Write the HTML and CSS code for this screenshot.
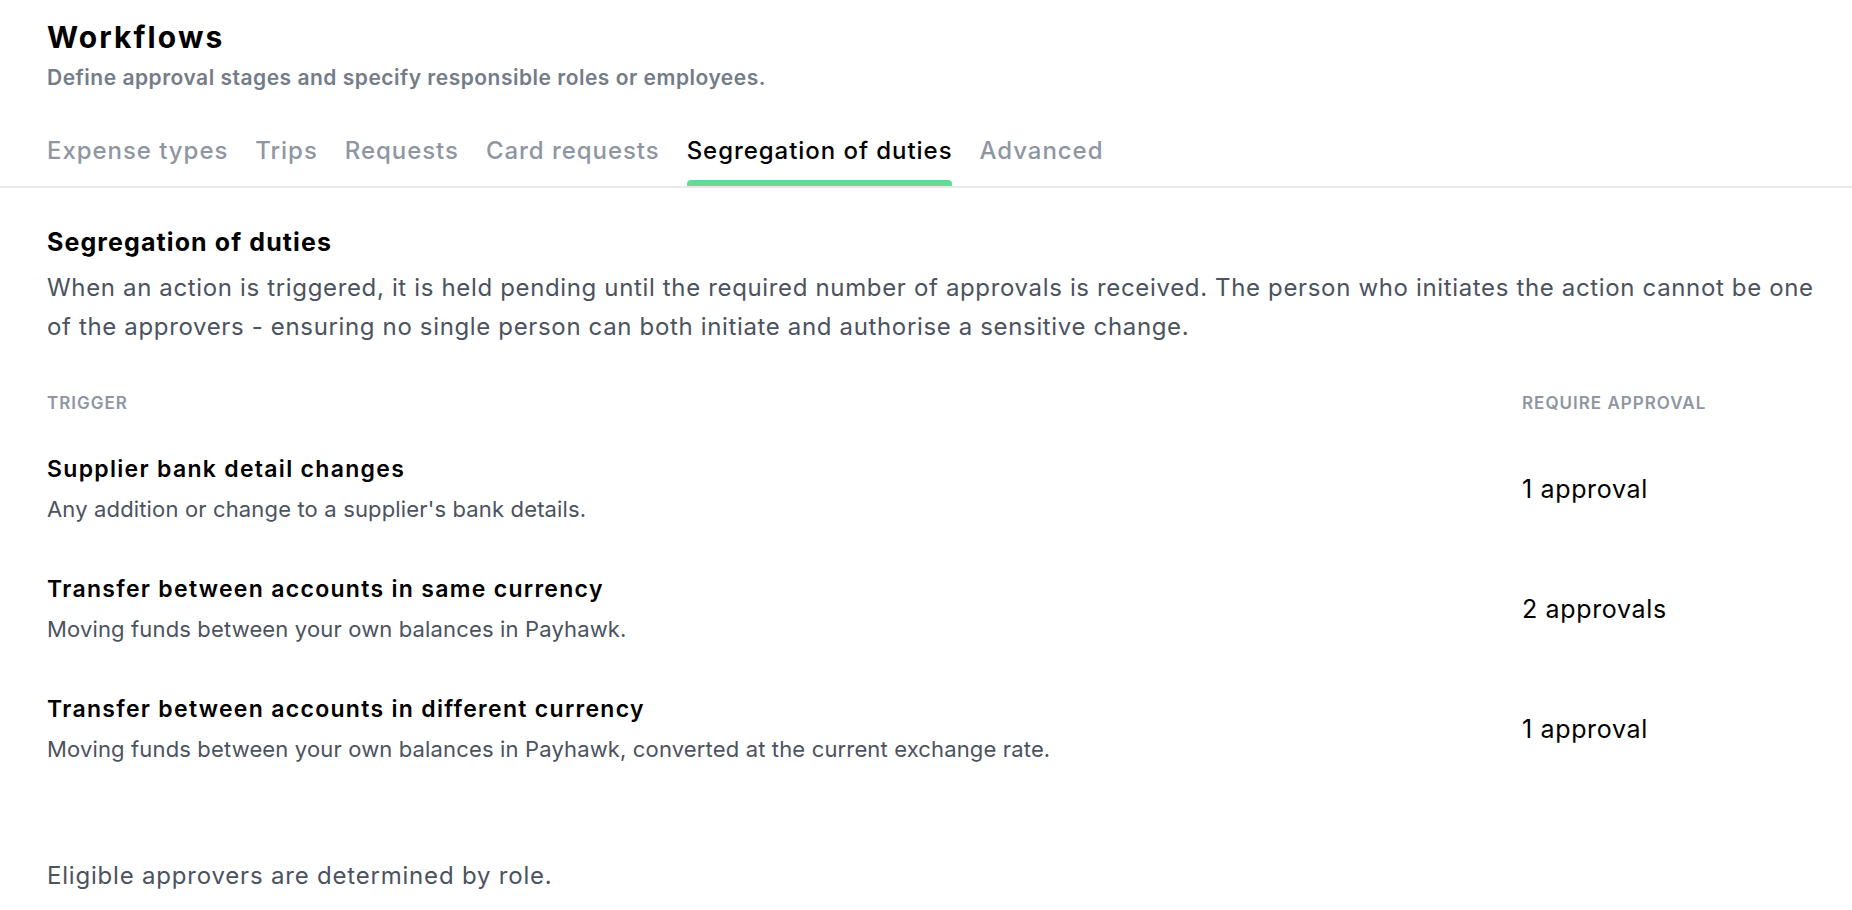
FILE: index.html
```html
<!DOCTYPE html>
<html lang="en">
<head>
<meta charset="utf-8">
<title>Workflows</title>
<link rel="stylesheet" href="styles.css">
</head>
<body>
<header class="page-header">
  <h1 class="page-title">Workflows</h1>
  <p class="page-subtitle">Define approval stages and specify responsible roles or employees.</p>
  <nav class="tabs">
    <a class="tab">Expense types</a>
    <a class="tab">Trips</a>
    <a class="tab">Requests</a>
    <a class="tab">Card requests</a>
    <a class="tab tab-active">Segregation of duties</a>
    <a class="tab">Advanced</a>
  </nav>
</header>
<main class="content">
  <h2 class="section-title">Segregation of duties</h2>
  <p class="section-desc">When an action is triggered, it is held pending until the required number of approvals is received. The person who initiates the action cannot be one of the approvers - ensuring no single person can both initiate and authorise a sensitive change.</p>
  <div class="table">
    <div class="table-head">
      <div class="col-label">TRIGGER</div>
      <div class="col-label">REQUIRE APPROVAL</div>
    </div>
    <div class="row">
      <div class="row-main">
        <div class="row-title">Supplier bank detail changes</div>
        <div class="row-desc">Any addition or change to a supplier's bank details.</div>
      </div>
      <div class="row-value">1 approval</div>
    </div>
    <div class="row">
      <div class="row-main">
        <div class="row-title">Transfer between accounts in same currency</div>
        <div class="row-desc">Moving funds between your own balances in Payhawk.</div>
      </div>
      <div class="row-value">2 approvals</div>
    </div>
    <div class="row">
      <div class="row-main">
        <div class="row-title">Transfer between accounts in different currency</div>
        <div class="row-desc">Moving funds between your own balances in Payhawk, converted at the current exchange rate.</div>
      </div>
      <div class="row-value">1 approval</div>
    </div>
  </div>
  <p class="footnote">Eligible approvers are determined by role.</p>
</main>
</body>
</html>
```

FILE: styles.css
```css
* { box-sizing: border-box; }
html, body {
  margin: 0;
  padding: 0;
  background: #ffffff;
  font-family: Inter, "Noto Sans", "Liberation Sans", sans-serif;
  color: #000000;
}
.page-header {
  padding: 19px 47px 0;
  border-bottom: 2px solid #e8e9eb;
}
.page-title {
  margin: 0;
  font-size: 30px;
  font-weight: 700;
  line-height: 36px;
  letter-spacing: 2.1px;
}
.page-subtitle {
  margin: 9px 0 0;
  font-size: 21px;
  font-weight: 600;
  line-height: 28px;
  letter-spacing: 0.5px;
  color: #747c89;
}
.tabs {
  display: flex;
  gap: 27px;
  margin-top: 44px;
}
.tab {
  display: flex;
  flex-direction: column;
  font-size: 24px;
  font-weight: 500;
  line-height: 30px;
  letter-spacing: 0.95px;
  color: #8e96a2;
}
.tab::after {
  content: "";
  height: 6px;
  margin-top: 14px;
  margin-right: 0.9px;
  border-radius: 4px 4px 0 0;
  background: transparent;
}
.tab-active {
  color: #000000;
}
.tab-active::after {
  background: #66d999;
}
.content {
  padding: 38px 24px 0 47px;
}
.section-title {
  margin: 0;
  font-size: 25px;
  font-weight: 700;
  line-height: 32px;
  letter-spacing: 1.1px;
}
.section-desc {
  margin: 10px 0 0;
  font-size: 24px;
  font-weight: 400;
  line-height: 39px;
  letter-spacing: 0.65px;
  color: #4b5260;
}
.table {
  margin-top: 46px;
}
.table-head {
  display: grid;
  grid-template-columns: 1fr 306px;
}
.col-label {
  font-size: 17px;
  font-weight: 600;
  line-height: 22px;
  letter-spacing: 1px;
  color: #8e96a2;
}
.row {
  display: grid;
  grid-template-columns: 1fr 306px;
  align-items: center;
  padding: 40px 0 11px;
}
.row-title {
  font-size: 23px;
  font-weight: 600;
  line-height: 30px;
  letter-spacing: 1.3px;
}
.row-desc {
  margin-top: 11px;
  font-size: 22px;
  font-weight: 400;
  line-height: 28px;
  letter-spacing: 0.15px;
  color: #4b5260;
}
.row-value {
  font-size: 25px;
  font-weight: 400;
  line-height: 30px;
  letter-spacing: 0.65px;
  color: #000000;
}
.footnote {
  margin: 87px 0 0;
  font-size: 24px;
  line-height: 30px;
  letter-spacing: 0.8px;
  color: #4b5260;
}
```
